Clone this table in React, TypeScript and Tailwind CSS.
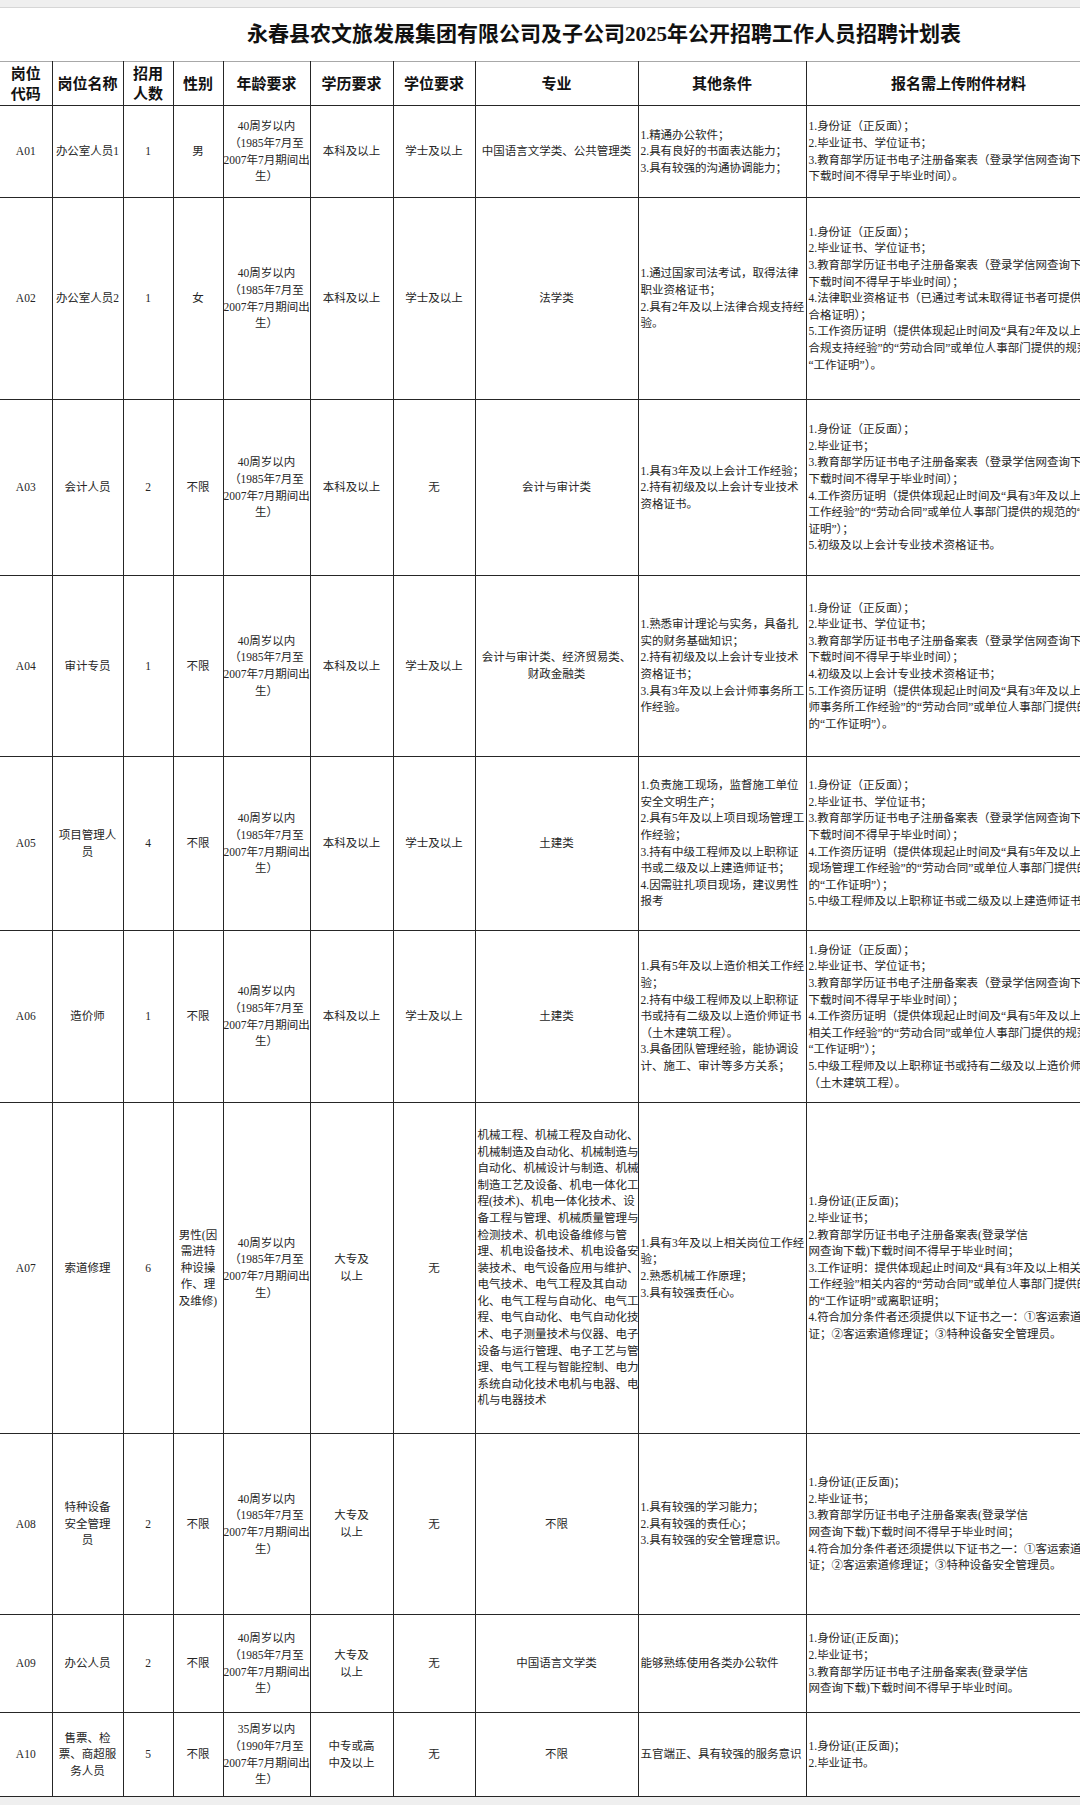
import React from 'react';

type Row = {
  code: string;
  name: string[];
  count: string;
  gender: string[];
  age: string[];
  edu: string[];
  degree: string;
  major: string[];
  majorLeft?: boolean;
  other: string[];
  files: string[];
  h: string;
};

const AGE40 = ['40周岁以内', '（1985年7月至', '2007年7月期间出', '生）'];
const AGE35 = ['35周岁以内', '（1990年7月至', '2007年7月期间出', '生）'];

const FILE_HEAD = [
  '1.身份证（正反面）；',
  '2.毕业证书、学位证书；',
  '3.教育部学历证书电子注册备案表（登录学信网查询下',
];

const rows: Row[] = [
  {
    code: 'A01',
    name: ['办公室人员1'],
    count: '1',
    gender: ['男'],
    age: AGE40,
    edu: ['本科及以上'],
    degree: '学士及以上',
    major: ['中国语言文学类、公共管理类'],
    other: ['1.精通办公软件；', '2.具有良好的书面表达能力；', '3.具有较强的沟通协调能力；'],
    files: [...FILE_HEAD, '下载时间不得早于毕业时间）。'],
    h: 'h-[92px]',
  },
  {
    code: 'A02',
    name: ['办公室人员2'],
    count: '1',
    gender: ['女'],
    age: AGE40,
    edu: ['本科及以上'],
    degree: '学士及以上',
    major: ['法学类'],
    other: ['1.通过国家司法考试，取得法律', '职业资格证书；', '2.具有2年及以上法律合规支持经', '验。'],
    files: [
      ...FILE_HEAD,
      '下载时间不得早于毕业时间）；',
      '4.法律职业资格证书（已通过考试未取得证书者可提供',
      '合格证明）；',
      '5.工作资历证明（提供体现起止时间及“具有2年及以上',
      '合规支持经验”的“劳动合同”或单位人事部门提供的规范',
      '“工作证明”）。',
    ],
    h: 'h-[202px]',
  },
  {
    code: 'A03',
    name: ['会计人员'],
    count: '2',
    gender: ['不限'],
    age: AGE40,
    edu: ['本科及以上'],
    degree: '无',
    major: ['会计与审计类'],
    other: ['1.具有3年及以上会计工作经验；', '2.持有初级及以上会计专业技术', '资格证书。'],
    files: [
      '1.身份证（正反面）；',
      '2.毕业证书；',
      '3.教育部学历证书电子注册备案表（登录学信网查询下',
      '下载时间不得早于毕业时间）；',
      '4.工作资历证明（提供体现起止时间及“具有3年及以上',
      '工作经验”的“劳动合同”或单位人事部门提供的规范的“工作',
      '证明”）；',
      '5.初级及以上会计专业技术资格证书。',
    ],
    h: 'h-[176px]',
  },
  {
    code: 'A04',
    name: ['审计专员'],
    count: '1',
    gender: ['不限'],
    age: AGE40,
    edu: ['本科及以上'],
    degree: '学士及以上',
    major: ['会计与审计类、经济贸易类、', '财政金融类'],
    other: [
      '1.熟悉审计理论与实务，具备扎',
      '实的财务基础知识；',
      '2.持有初级及以上会计专业技术',
      '资格证书；',
      '3.具有3年及以上会计师事务所工',
      '作经验。',
    ],
    files: [
      ...FILE_HEAD,
      '下载时间不得早于毕业时间）；',
      '4.初级及以上会计专业技术资格证书；',
      '5.工作资历证明（提供体现起止时间及“具有3年及以上',
      '师事务所工作经验”的“劳动合同”或单位人事部门提供的',
      '的“工作证明”）。',
    ],
    h: 'h-[181px]',
  },
  {
    code: 'A05',
    name: ['项目管理人', '员'],
    count: '4',
    gender: ['不限'],
    age: AGE40,
    edu: ['本科及以上'],
    degree: '学士及以上',
    major: ['土建类'],
    other: [
      '1.负责施工现场，监督施工单位',
      '安全文明生产；',
      '2.具有5年及以上项目现场管理工',
      '作经验；',
      '3.持有中级工程师及以上职称证',
      '书或二级及以上建造师证书；',
      '4.因需驻扎项目现场，建议男性',
      '报考',
    ],
    files: [
      ...FILE_HEAD,
      '下载时间不得早于毕业时间）；',
      '4.工作资历证明（提供体现起止时间及“具有5年及以上',
      '现场管理工作经验”的“劳动合同”或单位人事部门提供的',
      '的“工作证明”）；',
      '5.中级工程师及以上职称证书或二级及以上建造师证书',
    ],
    h: 'h-[174px]',
  },
  {
    code: 'A06',
    name: ['造价师'],
    count: '1',
    gender: ['不限'],
    age: AGE40,
    edu: ['本科及以上'],
    degree: '学士及以上',
    major: ['土建类'],
    other: [
      '1.具有5年及以上造价相关工作经',
      '验；',
      '2.持有中级工程师及以上职称证',
      '书或持有二级及以上造价师证书',
      '（土木建筑工程）。',
      '3.具备团队管理经验，能协调设',
      '计、施工、审计等多方关系；',
    ],
    files: [
      ...FILE_HEAD,
      '下载时间不得早于毕业时间）；',
      '4.工作资历证明（提供体现起止时间及“具有5年及以上',
      '相关工作经验”的“劳动合同”或单位人事部门提供的规范',
      '“工作证明”）；',
      '5.中级工程师及以上职称证书或持有二级及以上造价师',
      '（土木建筑工程）。',
    ],
    h: 'h-[172px]',
  },
  {
    code: 'A07',
    name: ['索道修理'],
    count: '6',
    gender: ['男性(因', '需进特', '种设操', '作、理', '及维修)'],
    age: AGE40,
    edu: ['大专及', '以上'],
    degree: '无',
    majorLeft: true,
    major: [
      '机械工程、机械工程及自动化、',
      '机械制造及自动化、机械制造与',
      '自动化、机械设计与制造、机械',
      '制造工艺及设备、机电一体化工',
      '程(技术)、机电一体化技术、设',
      '备工程与管理、机械质量管理与',
      '检测技术、机电设备维修与管',
      '理、机电设备技术、机电设备安',
      '装技术、电气设备应用与维护、',
      '电气技术、电气工程及其自动',
      '化、电气工程与自动化、电气工',
      '程、电气自动化、电气自动化技',
      '术、电子测量技术与仪器、电子',
      '设备与运行管理、电子工艺与管',
      '理、电气工程与智能控制、电力',
      '系统自动化技术电机与电器、电',
      '机与电器技术',
    ],
    other: ['1.具有3年及以上相关岗位工作经', '验；', '2.熟悉机械工作原理；', '3.具有较强责任心。'],
    files: [
      '1.身份证(正反面)；',
      '2.毕业证书；',
      '2.教育部学历证书电子注册备案表(登录学信',
      '网查询下载)下载时间不得早于毕业时间；',
      '3.工作证明：提供体现起止时间及“具有3年及以上相关',
      '工作经验”相关内容的“劳动合同”或单位人事部门提供的',
      '的“工作证明”或离职证明；',
      '4.符合加分条件者还须提供以下证书之一：①客运索道',
      '证；②客运索道修理证；③特种设备安全管理员。',
    ],
    h: 'h-[331px]',
  },
  {
    code: 'A08',
    name: ['特种设备', '安全管理', '员'],
    count: '2',
    gender: ['不限'],
    age: AGE40,
    edu: ['大专及', '以上'],
    degree: '无',
    major: ['不限'],
    other: ['1.具有较强的学习能力；', '2.具有较强的责任心；', '3.具有较强的安全管理意识。'],
    files: [
      '1.身份证(正反面)；',
      '2.毕业证书；',
      '3.教育部学历证书电子注册备案表(登录学信',
      '网查询下载)下载时间不得早于毕业时间；',
      '4.符合加分条件者还须提供以下证书之一：①客运索道',
      '证；②客运索道修理证；③特种设备安全管理员。',
    ],
    h: 'h-[181px]',
  },
  {
    code: 'A09',
    name: ['办公人员'],
    count: '2',
    gender: ['不限'],
    age: AGE40,
    edu: ['大专及', '以上'],
    degree: '无',
    major: ['中国语言文学类'],
    other: ['能够熟练使用各类办公软件'],
    files: [
      '1.身份证(正反面)；',
      '2.毕业证书；',
      '3.教育部学历证书电子注册备案表(登录学信',
      '网查询下载)下载时间不得早于毕业时间。',
    ],
    h: 'h-[98px]',
  },
  {
    code: 'A10',
    name: ['售票、检', '票、商超服', '务人员'],
    count: '5',
    gender: ['不限'],
    age: AGE35,
    edu: ['中专或高', '中及以上'],
    degree: '无',
    major: ['不限'],
    other: ['五官端正、具有较强的服务意识'],
    files: ['1.身份证(正反面)；', '2.毕业证书。'],
    h: 'h-[84px]',
  },
];

const headers: string[][] = [
  ['岗位', '代码'],
  ['岗位名称'],
  ['招用', '人数'],
  ['性别'],
  ['年龄要求'],
  ['学历要求'],
  ['学位要求'],
  ['专业'],
  ['其他条件'],
  ['报名需上传附件材料'],
];

const Lines = ({ lines, left }: { lines: string[]; left?: boolean }) => (
  <div className={left ? 'text-left' : 'text-center'}>
    {lines.map((l, i) => (
      <div key={i} className="whitespace-nowrap">
        {l}
      </div>
    ))}
  </div>
);

const cell = 'border-[1.5px] border-[#262626] align-middle p-0';

export default function App() {
  return (
    <div className="w-[1080px] h-[1805px] overflow-hidden bg-white font-['Liberation_Serif','Noto_Sans_CJK_SC',serif]">
      <div className="w-[1208px]">
        {/* top strip + title */}
        <div className="h-[8px] bg-[#efefef] border-b border-[#d6d6d6]" />
        <div className="h-[53px] flex items-center justify-center">
          <h1 className="text-[21px] font-bold text-[#111]">
            永春县农文旅发展集团有限公司及子公司2025年公开招聘工作人员招聘计划表
          </h1>
        </div>

        <table className="table-fixed border-collapse w-[1111px] text-[11.5px] leading-[16.6px] text-[#262626]">
          <colgroup>
            <col className="w-[52px]" />
            <col className="w-[71px]" />
            <col className="w-[50px]" />
            <col className="w-[50px]" />
            <col className="w-[87px]" />
            <col className="w-[83px]" />
            <col className="w-[82px]" />
            <col className="w-[163px]" />
            <col className="w-[168px]" />
            <col className="w-[305px]" />
          </colgroup>
          <thead>
            <tr className="h-[44px]">
              {headers.map((h, i) => (
                <th
                  key={i}
                  className={`${cell} border-t-[#a8a8a8] text-[15px] leading-[20px] font-bold text-[#111] ${i === 0 ? 'border-l-0' : ''}`}
                >
                  <Lines lines={h} />
                </th>
              ))}
            </tr>
          </thead>
          <tbody>
            {rows.map((r) => (
              <tr key={r.code} className={r.h}>
                <td className={`${cell} border-l-0 text-center`}>{r.code}</td>
                <td className={cell}>
                  <Lines lines={r.name} />
                </td>
                <td className={`${cell} text-center`}>{r.count}</td>
                <td className={cell}>
                  <Lines lines={r.gender} />
                </td>
                <td className={cell}>
                  <Lines lines={r.age} />
                </td>
                <td className={cell}>
                  <Lines lines={r.edu} />
                </td>
                <td className={`${cell} text-center`}>{r.degree}</td>
                <td className={`${cell} ${r.majorLeft ? 'pl-[2px]' : ''}`}>
                  <Lines lines={r.major} left={r.majorLeft} />
                </td>
                <td className={`${cell} pl-[2px]`}>
                  <Lines lines={r.other} left />
                </td>
                <td className={`${cell} pl-[2px]`}>
                  <Lines lines={r.files} left />
                </td>
              </tr>
            ))}
          </tbody>
        </table>
        <div className="h-[12px] bg-[#efefef]" />
      </div>
    </div>
  );
}
